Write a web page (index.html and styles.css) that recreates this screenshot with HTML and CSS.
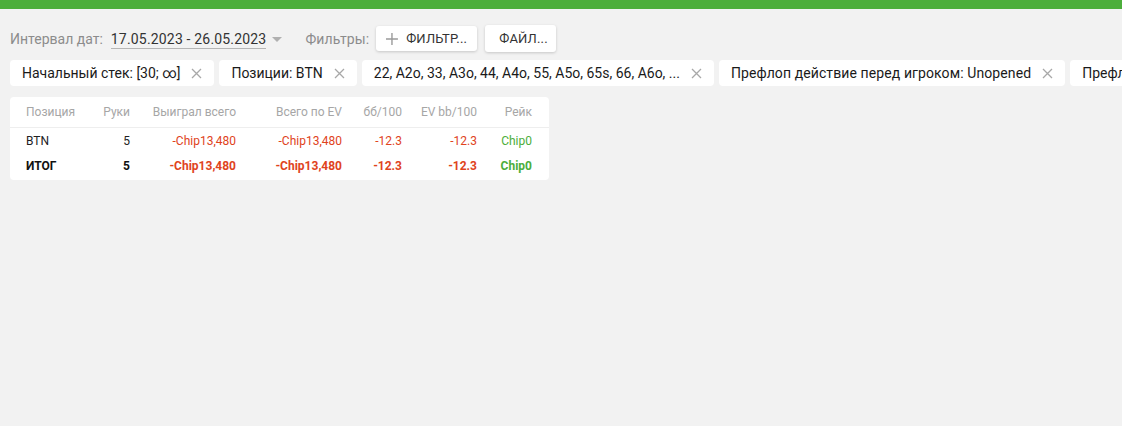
FILE: index.html
```html
<!DOCTYPE html>
<html lang="ru">
<head>
<meta charset="utf-8">
<link rel="stylesheet" href="styles.css">
</head>
<body>
<div class="topbar"></div>
<div class="page">
  <div class="toolbar">
    <span class="label">Интервал дат:</span>
    <span class="date">17.05.2023 - 26.05.2023</span>
    <span class="caret"></span>
    <span class="label filters-label">Фильтры:</span>
    <button class="btn btn-filter"><svg class="plus" width="12" height="12" viewBox="0 0 12 12"><path d="M6 0v12M0 6h12" stroke="#9a9a9a" stroke-width="1.4"/></svg>ФИЛЬТР...</button>
    <button class="btn btn-file">ФАЙЛ...</button>
  </div>
  <div class="chips">
    <div class="chip"><span>Начальный стек: [30; ∞]</span><svg class="x" width="11" height="11" viewBox="0 0 11 11"><path d="M1 1l9 9M10 1l-9 9" stroke="#a8a8a8" stroke-width="1.3"/></svg></div>
    <div class="chip"><span>Позиции: BTN</span><svg class="x" width="11" height="11" viewBox="0 0 11 11"><path d="M1 1l9 9M10 1l-9 9" stroke="#a8a8a8" stroke-width="1.3"/></svg></div>
    <div class="chip"><span>22, A2o, 33, A3o, 44, A4o, 55, A5o, 65s, 66, A6o, ...</span><svg class="x" width="11" height="11" viewBox="0 0 11 11"><path d="M1 1l9 9M10 1l-9 9" stroke="#a8a8a8" stroke-width="1.3"/></svg></div>
    <div class="chip chip-wide"><span>Префлоп действие перед игроком: Unopened</span><svg class="x" width="11" height="11" viewBox="0 0 11 11"><path d="M1 1l9 9M10 1l-9 9" stroke="#a8a8a8" stroke-width="1.3"/></svg></div>
    <div class="chip chip-last"><span>Префл</span></div>
  </div>
  <div class="card">
    <div class="grid head">
      <div class="l">Позиция</div>
      <div>Руки</div>
      <div>Выиграл всего</div>
      <div>Всего по EV</div>
      <div>бб/100</div>
      <div>EV bb/100</div>
      <div>Рейк</div>
    </div>
    <div class="grid row">
      <div class="l">BTN</div>
      <div>5</div>
      <div class="neg">-Chip13,480</div>
      <div class="neg">-Chip13,480</div>
      <div class="neg">-12.3</div>
      <div class="neg">-12.3</div>
      <div class="pos">Chip0</div>
    </div>
    <div class="grid row total">
      <div class="l">ИТОГ</div>
      <div>5</div>
      <div class="neg">-Chip13,480</div>
      <div class="neg">-Chip13,480</div>
      <div class="neg">-12.3</div>
      <div class="neg">-12.3</div>
      <div class="pos">Chip0</div>
    </div>
  </div>
</div>
</body>
</html>
```
FILE: styles.css
```css
* { box-sizing: border-box; }
html, body {
  margin: 0;
  padding: 0;
  background: #f2f2f2;
  font-family: Roboto, "Noto Sans", sans-serif;
  overflow: hidden;
  width: 1122px;
  height: 426px;
}
.topbar {
  height: 9px;
  background: #4cae3b;
}
.page {
  padding: 0 0 0 10px;
}
.toolbar {
  display: flex;
  align-items: center;
  height: 27px;
  margin-top: 16px;
  font-size: 14px;
}
.label {
  color: #8c8c8c;
}
.date {
  color: #333;
  margin-left: 8px;
  border-bottom: 1px solid #b5b5b5;
  line-height: 17px;
  padding-top: 2px;
  letter-spacing: 0.18px;
}
.caret {
  width: 0;
  height: 0;
  border-left: 5px solid transparent;
  border-right: 5px solid transparent;
  border-top: 5px solid #b0b0b0;
  margin-left: 6px;
  margin-top: 1px;
}
.filters-label {
  margin-left: 23px;
  letter-spacing: 0.1px;
}
.btn {
  font-family: Roboto, "Noto Sans", sans-serif;
  font-size: 13px;
  color: #333;
  background: #fff;
  border: none;
  border-radius: 3px;
  box-shadow: 0 1px 3px rgba(0,0,0,0.18);
  display: flex;
  align-items: center;
  padding: 0 10px;
  cursor: pointer;
  letter-spacing: 0.2px;
}
.btn-filter {
  height: 25px;
  margin-left: 7px;
  width: 101px;
}
.btn-filter .plus {
  margin-right: 8px;
}
.btn-file {
  height: 27px;
  margin-left: 8px;
  width: 71px;
  padding: 0 14px;
}
.chips {
  display: flex;
  flex-wrap: nowrap;
  gap: 5px;
  margin-top: 8px;
}
.chip {
  flex: none;
  display: flex;
  align-items: center;
  height: 26px;
  padding: 0 12px;
  background: #fff;
  border-radius: 4px;
  font-size: 14px;
  color: #1a1a1a;
  white-space: nowrap;
}
.chip .x {
  margin-left: 11px;
}
.chip-wide {
  letter-spacing: 0.1px;
}
.chip-last {
  padding-right: 0;
  border-radius: 4px 0 0 4px;
  flex: 1 0 auto;
}
.card {
  margin-top: 11px;
  width: 539px;
  background: #fff;
  border-radius: 4px;
  padding: 0 17px 2px 16px;
  font-size: 12px;
}
.grid {
  display: grid;
  grid-template-columns: 61px 43px 106px 106px 60px 75px 55px;
  align-items: center;
}
.grid > div {
  text-align: right;
  white-space: nowrap;
}
.grid > div.l {
  text-align: left;
}
.head {
  height: 31px;
  color: #a6a6a6;
  border-bottom: 1px solid #eeeeee;
  margin: 0 -17px 0 -16px;
  padding: 0 17px 0 16px;
}
.row {
  height: 25px;
  color: #222;
}
.row.total {
  font-weight: bold;
  color: #111;
}
.neg { color: #e0431c; }
.pos { color: #4cae3b; }
```
